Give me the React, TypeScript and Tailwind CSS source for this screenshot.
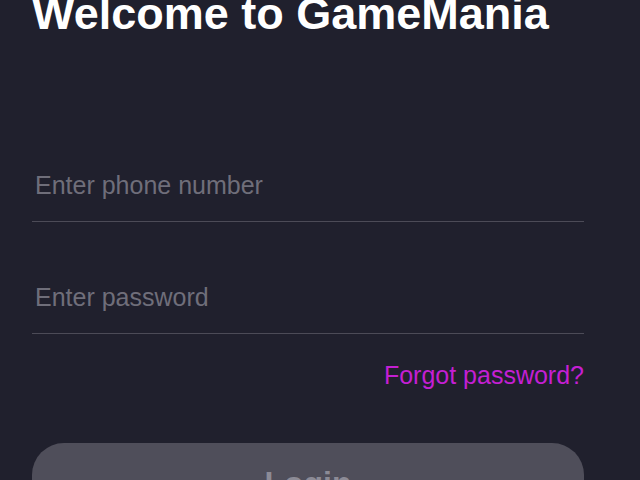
import React from "react";

const App = () => {
  return (
    <div
      className="min-h-screen overflow-hidden bg-[#20202d] px-8"
      style={{ fontFamily: '"Liberation Sans", Arial, sans-serif' }}
    >
      <div className="flex w-[552px] flex-col">
        <h1 className="mt-[-9px] text-[45px] leading-none font-bold text-white">
          Welcome to GameMania
        </h1>
        <form className="mt-[114px] flex flex-col">
          <input
            type="tel"
            placeholder="Enter phone number"
            className="h-[72px] w-full border-b border-[#4c4b57] bg-transparent px-[3px] text-[25px] text-white outline-none placeholder:text-[#6f6e7a]"
          />
          <input
            type="password"
            placeholder="Enter password"
            className="mt-[40px] h-[72px] w-full border-b border-[#4c4b57] bg-transparent px-[3px] text-[25px] text-white outline-none placeholder:text-[#6f6e7a]"
          />
          <a
            href="#"
            className="mt-[27px] self-end text-[25px] leading-[28px] text-[#c41fd3]"
          >
            Forgot password?
          </a>
          <button
            type="button"
            className="mt-[54px] h-[80px] w-full rounded-[32px] bg-[#4f4e5a] text-[32px] font-bold text-[#8c8b96]"
          >
            Login
          </button>
        </form>
      </div>
    </div>
  );
};

export default App;
